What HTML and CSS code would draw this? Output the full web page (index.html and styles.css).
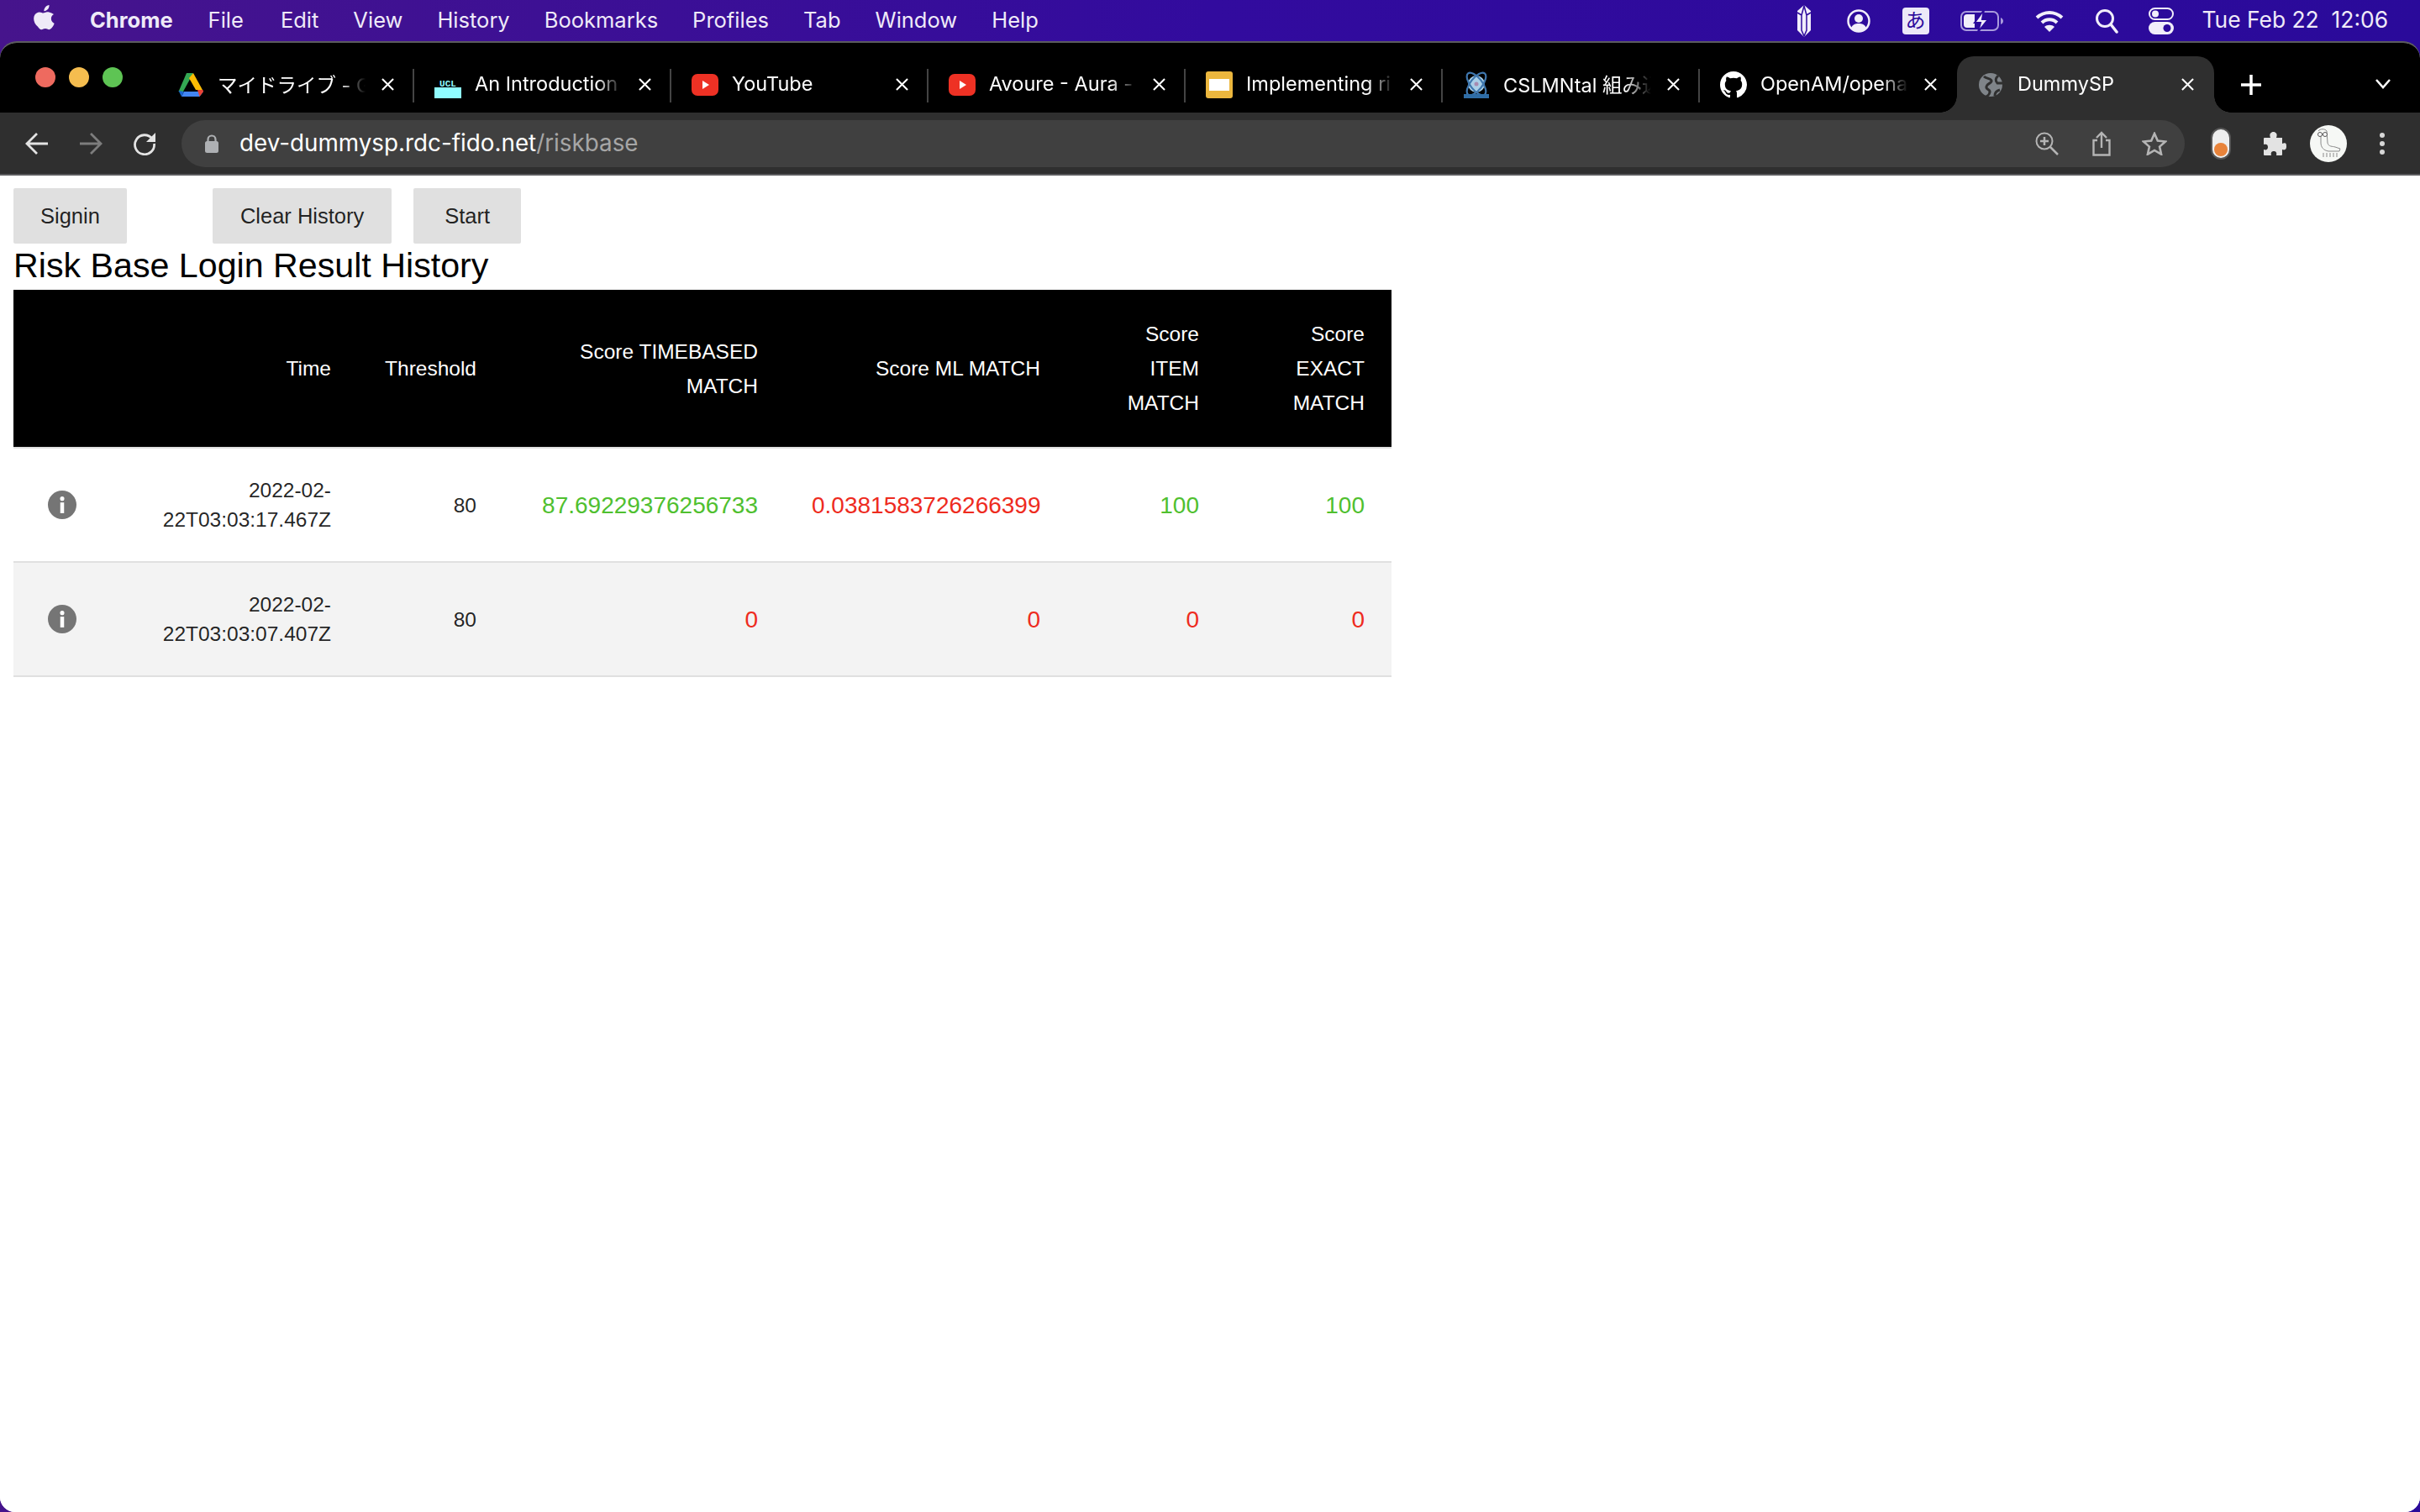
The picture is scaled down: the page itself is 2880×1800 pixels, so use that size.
FILE: index.html
```html
<!DOCTYPE html>
<html lang="en">
<head>
    <meta charset="UTF-8">
    <title>DummySP</title>
    <link rel="stylesheet" href="styles.css">
</head>
<body>
    <header class="menubar">
        <svg class="apple" viewBox="0 0 26 32"><path fill="#efeaf8" d="M18.500 0c.2 2-.5 3.700-1.600 5-1.100 1.300-2.800 2.300-4.500 2.200-.2-1.800.6-3.600 1.600-4.800C15.100 1.100 17 .2 18.500 0zM24 11c-.2.100-3.100 1.800-3.100 5.300 0 4.100 3.600 5.500 3.700 5.600-.1.200-.6 2-1.900 3.900-1.200 1.700-2.400 3.400-4.300 3.400-1.800 0-2.400-1.100-4.500-1.100s-2.800 1.100-4.500 1.100c-1.800.1-3.200-1.800-4.400-3.500C.6 22.200-1.200 16 1.300 11.800c1.200-2.100 3.400-3.400 5.700-3.400 1.800 0 3.400 1.200 4.500 1.200s3-1.500 5.100-1.300c.9 0 3.400.4 7.400 2.700z"/></svg>
        <strong class="menu-app">Chrome</strong>
        <nav class="menu-items">
            <span>File</span><span>Edit</span><span>View</span><span>History</span><span>Bookmarks</span><span>Profiles</span><span>Tab</span><span>Window</span><span>Help</span>
        </nav>
        <div class="status">
            <svg class="st-gem" viewBox="0 0 20 38"><path fill="#f1eefa" d="M10 0l8 7v23l-8 8-8-8V7z"/><path fill="none" stroke="#2c0a9c" stroke-width="1.500" d="M2 9l5 3 3-11 3 11 5-3M7 12v18l3 7 3-7V12"/></svg>
            <svg class="st-user" viewBox="0 0 28 28"><circle cx="14" cy="14" r="12.500" fill="none" stroke="#f1eefa" stroke-width="2.500"/><circle cx="14" cy="11" r="5" fill="#f1eefa"/><path fill="#f1eefa" d="M5 22c2-4 5-5 9-5s7 1 9 5c-2 3-5 5-9 5s-7-2-9-5z"/></svg>
            <span class="st-ime">あ</span>
            <svg class="st-battery" viewBox="0 0 52 26"><rect x="1" y="2" width="44" height="22" rx="6" fill="none" stroke="#a99bdc" stroke-width="2"/><path fill="#f1eefa" d="M4 9a4 4 0 0 1 4-4h9v16H8a4 4 0 0 1-4-4z"/><path fill="#f1eefa" stroke="#2c0a9c" stroke-width="2" d="M28 0L17 15h7l-3 11 12-15h-7z"/><path fill="#a99bdc" d="M48 9c2 1 3 2 3 4s-1 3-3 4z"/></svg>
            <svg class="st-wifi" viewBox="0 0 34 26"><path fill="none" stroke="#f1eefa" stroke-width="4" d="M2 9c9-8 21-8 30 0M8 15c5-5 13-5 18 0"/><path fill="#f1eefa" d="M17 26l-6-6c3-3 9-3 12 0z"/></svg>
            <svg class="st-search" viewBox="0 0 28 30"><circle cx="12" cy="12" r="9.500" fill="none" stroke="#f1eefa" stroke-width="3"/><path stroke="#f1eefa" stroke-width="3.500" stroke-linecap="round" d="M19 19l7 9"/></svg>
            <svg class="st-control" viewBox="0 0 30 32"><rect x="1" y="1" width="28" height="13" rx="6.500" fill="none" stroke="#f1eefa" stroke-width="2"/><circle cx="8" cy="7.500" r="4" fill="#f1eefa"/><rect y="17" width="30" height="15" rx="7.500" fill="#f1eefa"/><circle cx="22" cy="24.500" r="4.500" fill="#2c0a9c"/></svg>
            <span class="clock">Tue Feb 22&nbsp; 12:06</span>
        </div>
    </header>

    <div class="window">
        <div class="tabbar">
            <div class="traffic">
                <i class="dot red"></i><i class="dot yellow"></i><i class="dot green"></i>
            </div>
            <div class="tab">
                <svg class="fav" viewBox="0 0 32 32"><path fill="#34a853" d="M11 2h8L7 24H1.500z"/><path fill="#fbbc04" d="M19 2l11 20h-8L14 8z"/><path fill="#4285f4" d="M8 24h23l-4.500 6H5z"/><path fill="#ea4335" d="M24 22h6.500l.5 2-4.500 6z"/><path fill="#1967d2" d="M1.500 23L8 24l-3 6z"/></svg>
                <span class="tab-title">マイドライブ - G</span>
                <svg class="tab-x" viewBox="0 0 16 16"><path stroke="#fff" stroke-width="2.200" d="M1 1l14 14M15 1L1 15"/></svg>
            </div>
            <div class="tab">
                <svg class="fav" viewBox="0 0 32 32"><text x="16" y="18" class="fav-ucl">UCL</text><rect y="19" width="32" height="13" fill="#8ffcff"/></svg>
                <span class="tab-title">An Introduction</span>
                <svg class="tab-x" viewBox="0 0 16 16"><path stroke="#fff" stroke-width="2.200" d="M1 1l14 14M15 1L1 15"/></svg>
            </div>
            <div class="tab">
                <svg class="fav" viewBox="0 0 32 32"><rect y="3" width="32" height="26" rx="7" fill="#ee3124"/><path fill="#fff" d="M13 11l8 5-8 5z"/></svg>
                <span class="tab-title">YouTube</span>
                <svg class="tab-x" viewBox="0 0 16 16"><path stroke="#fff" stroke-width="2.200" d="M1 1l14 14M15 1L1 15"/></svg>
            </div>
            <div class="tab">
                <svg class="fav" viewBox="0 0 32 32"><rect y="3" width="32" height="26" rx="7" fill="#ee3124"/><path fill="#fff" d="M13 11l8 5-8 5z"/></svg>
                <span class="tab-title">Avoure - Aura -</span>
                <svg class="tab-x" viewBox="0 0 16 16"><path stroke="#fff" stroke-width="2.200" d="M1 1l14 14M15 1L1 15"/></svg>
            </div>
            <div class="tab">
                <svg class="fav" viewBox="0 0 32 32"><rect width="32" height="32" rx="3" fill="#ecb73e"/><rect x="4" y="9" width="24" height="14" fill="#fff"/></svg>
                <span class="tab-title">Implementing ri</span>
                <svg class="tab-x" viewBox="0 0 16 16"><path stroke="#fff" stroke-width="2.200" d="M1 1l14 14M15 1L1 15"/></svg>
            </div>
            <div class="tab">
                <svg class="fav" viewBox="0 0 32 32"><circle cx="16" cy="15" r="10" fill="#a9cfe8"/><circle cx="16" cy="15" r="2.500" fill="#a78bb0"/><ellipse cx="16" cy="15" rx="7" ry="16" fill="none" stroke="#3f77ae" stroke-width="2.200" transform="rotate(38 16 15)"/><ellipse cx="16" cy="15" rx="7" ry="16" fill="none" stroke="#3f77ae" stroke-width="2.200" transform="rotate(-38 16 15)"/><rect x="1" y="27" width="30" height="5" fill="#2f6da6"/></svg>
                <span class="tab-title">CSLMNtal 組み込</span>
                <svg class="tab-x" viewBox="0 0 16 16"><path stroke="#fff" stroke-width="2.200" d="M1 1l14 14M15 1L1 15"/></svg>
            </div>
            <div class="tab">
                <svg class="fav" viewBox="0 0 16 16"><path fill="#fff" d="M8 0C3.580 0 0 3.580 0 8c0 3.540 2.290 6.530 5.470 7.590.4.070.55-.17.55-.38v-1.340c-2.230.48-2.700-1.070-2.700-1.070-.36-.92-.89-1.170-.89-1.170-.73-.5.050-.49.050-.49.8.060 1.220.82 1.220.82.710 1.220 1.870.870 2.330.66.070-.52.280-.87.510-1.070-1.780-.2-3.640-.89-3.640-3.950 0-.87.310-1.590.82-2.150-.08-.2-.36-1.020.08-2.120 0 0 .67-.21 2.200.82A7.600 7.600 0 0 1 8 3.850c.68 0 1.360.09 2 .27 1.530-1.040 2.200-.82 2.200-.82.44 1.100.16 1.920.08 2.120.51.560.82 1.270.82 2.150 0 3.070-1.870 3.750-3.650 3.950.29.250.54.730.54 1.480v2.190c0 .21.150.46.550.38A8 8 0 0 0 16 8c0-4.420-3.580-8-8-8z"/></svg>
                <span class="tab-title">OpenAM/openam</span>
                <svg class="tab-x" viewBox="0 0 16 16"><path stroke="#fff" stroke-width="2.200" d="M1 1l14 14M15 1L1 15"/></svg>
            </div>
            <div class="tab tab-active">
                <svg class="fav" viewBox="0 0 32 32"><circle cx="16" cy="16" r="14" fill="#7f8489"/><path fill="none" stroke="#2f2f2f" stroke-width="3" d="M8 6c3 3 8 2 9 5s-5 3-6 7 5 3 4 7-3 4-4 5M25 5c-3 3-4 6-1 9h6M21 29c0-3 2-6 6-7"/></svg>
                <span class="tab-title">DummySP</span>
                <svg class="tab-x" viewBox="0 0 16 16"><path stroke="#fff" stroke-width="2.200" d="M1 1l14 14M15 1L1 15"/></svg>
            </div>
            <svg class="newtab" viewBox="0 0 24 24"><path stroke="#fff" stroke-width="3.500" d="M12 0v24M0 12h24"/></svg>
            <svg class="tabmenu" viewBox="0 0 20 14"><path fill="none" stroke="#fff" stroke-width="2.500" d="M2 2l8 9 8-9"/></svg>
        </div>

        <div class="toolbar">
            <svg class="nav-icon" viewBox="0 0 28 28"><path fill="none" stroke="#e3e3e3" stroke-width="2.800" d="M27 14H3M14 2L2 14l12 12"/></svg>
            <svg class="nav-icon" viewBox="0 0 28 28"><path fill="none" stroke="#7d7d7d" stroke-width="2.800" d="M1 14h24M14 2l12 12-12 12"/></svg>
            <svg class="nav-icon nav-reload" viewBox="0 0 28 28"><path fill="none" stroke="#e3e3e3" stroke-width="2.800" d="M23 8A11.500 11.500 0 1 0 25.500 14"/><path fill="#e3e3e3" d="M27 1v11H16z"/></svg>
            <div class="omnibox">
                <svg class="lock" viewBox="0 0 16 22"><path fill="none" stroke="#aeb0b3" stroke-width="2.200" d="M3.500 9V6a4.500 4.500 0 0 1 9 0v3"/><rect y="8" width="16" height="14" rx="2.500" fill="#aeb0b3"/></svg>
                <span class="url">dev-dummysp.rdc-fido.net<span class="url-path">/riskbase</span></span>
                <svg class="omni-icon omni-zoom" viewBox="0 0 28 28"><circle cx="11" cy="11" r="9.500" fill="none" stroke="#b4b4b4" stroke-width="2"/><path stroke="#b4b4b4" stroke-width="2.500" d="M18 18l9 9M11 6v10M6 11h10"/></svg>
                <svg class="omni-icon omni-share" viewBox="0 0 24 30"><path fill="none" stroke="#b4b4b4" stroke-width="2.400" d="M7 11H2.500v17.500h19V11H17M12 20V2M6 8l6-6 6 6"/></svg>
                <svg class="omni-icon omni-star" viewBox="0 0 30 28"><path fill="none" stroke="#b4b4b4" stroke-width="2.600" d="M15 2l3.800 8.500 9.200 1-6.900 6.100 2 9.100-8.100-4.700-8.100 4.700 2-9.100L2 11.500l9.200-1z"/></svg>
            </div>
            <div class="ext-toggle"><i class="ext-dot"></i></div>
            <svg class="ext-puzzle" viewBox="0 0 28 28"><path fill="#e3e3e3" d="M2 7h7c-2-5 1-7 3.500-7S18 2 16 7h7v7c5-2 5 1 5 3.500s-1 5-5 3.500v6a1 1 0 0 1-1 1h-6c1-4-1-5-3-5s-4 1-3 5H2a1 1 0 0 1-1-1v-6c3 1 5 0 5-3s-2-4-5-3V8a1 1 0 0 1 1-1z"/></svg>
            <svg class="avatar" viewBox="0 0 44 44"><circle cx="22" cy="22" r="22" fill="#f6f8f5"/><path fill="none" stroke="#8a8a8a" stroke-width="1" d="M10 7c2-3 8-3 10 0l1 14c1 5 6 4 9 5l6 2-1 3H22c-6-1-9-5-9-10V13M16 33v5M20 33v5M24 33v5M28 33v5M32 33v5"/><circle cx="12" cy="11" r="2.500" fill="#fff" stroke="#555"/><circle cx="18" cy="11" r="2.500" fill="#fff" stroke="#555"/></svg>
            <div class="kebab"><i></i><i></i><i></i></div>
        </div>

        <main class="page">
            <div class="actions">
                <button class="btn btn-signin">Signin</button>
                <button class="btn btn-clear">Clear History</button>
                <button class="btn btn-start">Start</button>
            </div>
            <h1 class="heading">Risk Base Login Result History</h1>
            <table class="history">
                <thead>
                    <tr>
                        <th class="col-info"></th>
                        <th class="col-time">Time</th>
                        <th class="col-threshold">Threshold</th>
                        <th class="col-timebased">Score TIMEBASED MATCH</th>
                        <th class="col-ml">Score ML MATCH</th>
                        <th class="col-item">Score ITEM MATCH</th>
                        <th class="col-exact">Score EXACT MATCH</th>
                    </tr>
                </thead>
                <tbody>
                    <tr>
                        <td><svg class="info" viewBox="0 0 24 24"><circle cx="12" cy="12" r="12" fill="#757575"/><circle cx="12" cy="6.800" r="1.800" fill="#fff"/><rect x="10.400" y="10" width="3.200" height="9" fill="#fff"/></svg></td>
                        <td class="small">2022-02-22T03:03:17.467Z</td>
                        <td class="small">80</td>
                        <td class="pass">87.69229376256733</td>
                        <td class="fail">0.0381583726266399</td>
                        <td class="pass">100</td>
                        <td class="pass">100</td>
                    </tr>
                    <tr class="even">
                        <td><svg class="info" viewBox="0 0 24 24"><circle cx="12" cy="12" r="12" fill="#757575"/><circle cx="12" cy="6.800" r="1.800" fill="#fff"/><rect x="10.400" y="10" width="3.200" height="9" fill="#fff"/></svg></td>
                        <td class="small">2022-02-22T03:03:07.407Z</td>
                        <td class="small">80</td>
                        <td class="fail">0</td>
                        <td class="fail">0</td>
                        <td class="fail">0</td>
                        <td class="fail">0</td>
                    </tr>
                </tbody>
            </table>
        </main>
    </div>
</body>
</html>
```

FILE: styles.css
```css
html, body {
    margin: 0;
    height: 100%;
}

body {
    width: 2880px;
    height: 1800px;
    overflow: hidden;
    display: flex;
    flex-direction: column;
    background: linear-gradient(90deg, #46148c 0%, #320b9e 50%, #2a0a9a 100%);
    font-family: "Liberation Sans", Arial, sans-serif;
}

/* mac menu bar */
.menubar {
    height: 49px;
    flex: none;
    display: flex;
    align-items: center;
    box-sizing: border-box;
    padding: 0 38px 3px 40px;
    color: #efeaf8;
    font-family: Inter, "Noto Sans CJK JP", sans-serif;
    font-size: 25.500px;
}

.apple {
    width: 26px;
    height: 32px;
    margin-right: 41px;
    margin-top: -2px;
}

.menu-app {
    font-weight: 700;
    margin-right: 42px;
}

.menu-items {
    display: flex;
    gap: 41px;
}

.menu-items span:first-child {
    margin-right: 3px;
}

.status {
    margin-left: auto;
    display: flex;
    align-items: center;
    margin-bottom: -3px;
}

.st-gem { width: 20px; height: 38px; margin-right: 41px; }
.st-user { width: 28px; height: 28px; margin-right: 38px; }
.st-ime {
    width: 32px;
    height: 32px;
    margin-right: 37px;
    background: #ece8f8;
    color: #2c0a9c;
    border-radius: 4px;
    font-size: 24px;
    line-height: 32px;
    text-align: center;
}
.st-battery { width: 52px; height: 26px; margin-right: 37px; }
.st-wifi { width: 34px; height: 26px; margin-right: 37px; }
.st-search { width: 28px; height: 30px; margin-right: 36px; }
.st-control { width: 30px; height: 32px; margin-right: 34px; }

.clock {
    white-space: nowrap;
    font-size: 26.400px;
    margin-top: -3px;
}

/* browser window */
.window {
    flex: 1;
    display: flex;
    flex-direction: column;
    border-radius: 20px 20px 18px 18px;
    border-top: 2px solid #5b5b5e;
    overflow: hidden;
    background: #fff;
}

.tabbar {
    height: 83px;
    flex: none;
    display: flex;
    align-items: flex-end;
    background: #000;
}

.traffic {
    width: 187px;
    flex: none;
    align-self: stretch;
    display: flex;
    gap: 16px;
    padding: 29px 0 0 42px;
    box-sizing: border-box;
}

.dot {
    width: 24px;
    height: 24px;
    border-radius: 50%;
}

.red { background: #ee6a5f; }
.yellow { background: #f5bd4f; }
.green { background: #5ec454; }

.tab {
    position: relative;
    width: 306px;
    height: 67px;
    flex: none;
    box-sizing: border-box;
    display: flex;
    align-items: center;
    padding: 0 0 0 24px;
    color: #fff;
    font-family: Inter, "Noto Sans CJK JP", sans-serif;
    font-size: 23.500px;
}

.tab::after {
    content: "";
    position: absolute;
    right: 0;
    top: 15px;
    width: 2px;
    height: 40px;
    background: #444;
}

.tab:nth-last-of-type(2)::after {
    display: none;
}

.tab-active {
    background: #2f2f2f;
    border-radius: 20px 20px 0 0;
}

/* concave corners at the foot of the active tab */
.tab-active::before,
.tab-active::after {
    content: "";
    position: absolute;
    top: auto;
    bottom: 0;
    width: 20px;
    height: 20px;
}

.tab-active::before {
    left: -20px;
    background: radial-gradient(circle at 0 0, #000 19.500px, #2f2f2f 20px);
}

.tab-active::after {
    right: -20px;
    background: radial-gradient(circle at 100% 0, #000 19.500px, #2f2f2f 20px);
}

.fav {
    width: 32px;
    height: 32px;
    flex: none;
    margin-right: 16px;
}

.fav-ucl {
    fill: #8ffcff;
    font-family: "Liberation Mono", monospace;
    font-size: 11px;
    font-weight: 700;
    text-anchor: middle;
}

.tab-title {
    width: 176px;
    flex: none;
    margin-top: -2px;
    white-space: nowrap;
    overflow: hidden;
    -webkit-mask-image: linear-gradient(90deg, #000 82%, transparent 100%);
    mask-image: linear-gradient(90deg, #000 82%, transparent 100%);
}

.tab-x {
    margin-left: 19px;
    width: 15px;
    height: 15px;
    flex: none;
}

.newtab {
    width: 24px;
    height: 24px;
    margin: 0 0 21px 32px;
    flex: none;
}

.tabmenu {
    width: 20px;
    height: 14px;
    margin: 0 0 27px 135px;
    flex: none;
}

.toolbar {
    height: 73px;
    flex: none;
    display: flex;
    align-items: center;
    background: #2f2f2f;
    border-bottom: 2px solid #5b5b5e;
    padding-left: 30px;
}

.nav-icon {
    width: 28px;
    height: 28px;
    margin-right: 36px;
    flex: none;
}

.nav-reload {
    margin-right: 30px;
}

.omnibox {
    width: 2384px;
    height: 56px;
    flex: none;
    display: flex;
    align-items: center;
    box-sizing: border-box;
    padding-left: 28px;
    border-radius: 28px;
    background: #404040;
}

.lock {
    width: 16px;
    height: 22px;
    margin-right: 25px;
}

.url {
    color: #fff;
    font-family: Inter, sans-serif;
    font-size: 27.800px;
    margin-top: -1px;
}

.url-path {
    color: #a6a6a6;
}

.omni-icon {
    flex: none;
}

.omni-zoom { width: 28px; height: 28px; margin-left: auto; }
.omni-share { width: 24px; height: 30px; margin-left: 39px; }
.omni-star { width: 30px; height: 28px; margin: 0 21px 0 36px; }

.ext-toggle {
    width: 20px;
    height: 32px;
    margin-left: 31px;
    flex: none;
    box-sizing: content-box;
    display: flex;
    align-items: flex-end;
    justify-content: center;
    padding-bottom: 2px;
    background: #eee;
    border: 2px solid #555;
    border-radius: 12px;
}

.ext-dot {
    width: 16px;
    height: 16px;
    background: #e8833a;
    border-radius: 50%;
}

.ext-puzzle {
    width: 28px;
    height: 28px;
    margin-left: 38px;
    flex: none;
}

.avatar {
    width: 44px;
    height: 44px;
    margin-left: 28px;
    flex: none;
}

.kebab {
    display: flex;
    flex-direction: column;
    gap: 4px;
    margin-left: 39px;
}

.kebab i {
    width: 6px;
    height: 6px;
    background: #d8d8d8;
    border-radius: 50%;
}

/* page content */
.page {
    flex: 1;
    padding: 15px 16px 0;
    color: #000;
    background: #fff;
}

.actions {
    display: flex;
    gap: 26px;
}

.btn {
    height: 66px;
    padding: 0 32px;
    border: 0;
    border-radius: 2px;
    background: #e0e0e0;
    color: rgba(0, 0, 0, 0.87);
    font-family: "Liberation Sans", Arial, sans-serif;
    font-size: 25.500px;
}

.btn-signin {
    margin-right: 76px;
}

.btn-clear {
    padding: 0 33px;
}

.btn-start {
    padding: 0 37px;
}

.heading {
    margin: 0;
    font-size: 41.200px;
    font-weight: 400;
    line-height: 52px;
}

.history {
    width: 1640px;
    margin-top: 3px;
    border-collapse: collapse;
    table-layout: fixed;
}

.history th,
.history td {
    box-sizing: border-box;
    padding: 32px;
    text-align: right;
    border-bottom: 2px solid #e0e0e0;
}

.history th {
    background: #000;
    color: #fff;
    font-size: 24.500px;
    font-weight: 400;
    line-height: 41px;
}

.history td {
    font-size: 28px;
    line-height: 35px;
}

.history td:first-child {
    padding-left: 41px;
    text-align: left;
}

.col-info { width: 144px; }
.col-time { width: 266px; }
.col-threshold { width: 173px; }
.col-timebased { width: 335px; }
.col-ml { width: 336px; }
.col-item { width: 189px; }
.col-exact { width: 197px; }

.history .small {
    font-size: 24.500px;
    color: rgba(0, 0, 0, 0.87);
}

.even {
    background: #f3f3f3;
}

.pass { color: #4fc02f; }
.fail { color: #ee2b1e; }

.info {
    display: block;
    width: 34px;
    height: 34px;
}
```
